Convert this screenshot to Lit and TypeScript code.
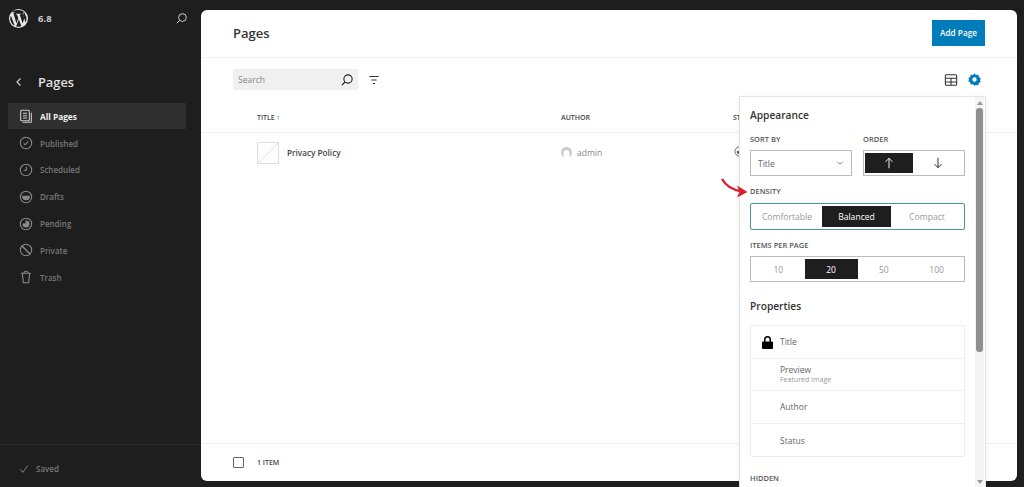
import { LitElement, html, css, svg } from "lit";
import { customElement } from "lit/decorators.js";

const ic = (s: number, body: unknown, cls = "") =>
  html`<svg class=${cls} width=${s} height=${s} viewBox="0 0 24 24" fill="none" stroke="currentColor" stroke-width="1.6">${body}</svg>`;

const searchIcon = svg`<circle cx="13.5" cy="10.5" r="6.2"/><path d="M9 15 4.5 19.5"/>`;

const navIcons: Record<string, unknown> = {
  "All Pages": svg`<rect x="4" y="3.5" width="13" height="15.5" rx="1.5"/><path d="M7.5 8h6M7.5 11.5h6M7.5 15h6M20 7v13.5a1 1 0 0 1-1 1H7"/>`,
  Published: svg`<circle cx="12" cy="12" r="8.5"/><path d="m8.5 12.5 2.3 2.2 4.5-5" />`,
  Scheduled: svg`<circle cx="12" cy="12" r="8.5"/><path d="M12.5 7v5.5H8.5"/>`,
  Drafts: svg`<circle cx="12" cy="12" r="8.5"/><path d="M7 11h10a5 5 0 0 1-10 0Z" fill="currentColor"/>`,
  Pending: svg`<circle cx="12" cy="12" r="8.5"/><path d="M12 7.5a4.5 4.5 0 1 1-4.5 4.5H12Z" fill="currentColor"/>`,
  Private: svg`<circle cx="12" cy="12" r="8.5"/><path d="m6 6 12 12" stroke-width="2.2"/>`,
  Trash: svg`<path d="M4.5 6.5h15M6.5 6.5 8 20.5h8l1.5-14M9 6.5c0-2 .8-3 3-3s3 1 3 3"/>`,
};

@customElement("app-root")
export class AppRoot extends LitElement {
  static styles = css`
    :host { display: block; height: 487px; overflow: hidden; background: #1e1e1e; position: relative; font-family: "Open Sans", "Liberation Sans", sans-serif; color: #1e1e1e; }
    .layout { display: flex; height: 487px; }
    .side { width: 201px; flex: none; display: flex; flex-direction: column; color: #e0e0e0; }
    .brand { display: flex; align-items: center; height: 36px; padding: 0 12px 0 9px; }
    .ver { margin-left: 10px; font-size: 9.5px; font-weight: 700; color: #ccc; flex: 1; }
    .brand svg.s { color: #ccc; }
    .title { display: flex; align-items: center; margin-top: 34px; height: 24px; padding-left: 13px; }
    .title span { margin-left: 13px; font-size: 12.8px; font-weight: 600; color: #e0e0e0; }
    .back { color: #ccc; }
    nav { margin: 9px 15px 0 8px; display: flex; flex-direction: column; flex: 1; }
    .item { display: flex; align-items: center; height: 26.8px; padding-left: 10px; gap: 6px; font-size: 8px; font-weight: 600; color: #777; }
    .item svg { color: #8a8a8a; }
    .item.on { background: #2f2f2f; color: #f0f0f0; font-size: 8.3px; font-weight: 700; height: 26px; margin-bottom: .8px; }
    .item.on svg { color: #ccc; }
    .saved { border-top: 1px solid #2a2a2a; height: 43px; display: flex; align-items: center; gap: 7px; padding: 5px 0 0 19px; box-sizing: border-box; font-size: 8px; font-weight: 600; color: #777; }
    .saved svg { color: #aaa; }
    .panel { width: 816px; flex: none; margin: 10px 0 6px; background: #fff; border-radius: 6px; display: flex; flex-direction: column; }
    .head { height: 47px; flex: none; border-bottom: 1px solid #f0f0f0; display: flex; align-items: center; justify-content: space-between; padding: 0 32px; }
    .head h1 { margin: -1px 0 0; font-size: 13px; font-weight: 600; color: #333; }
    .add { background: #007cba; color: #fff; font-size: 8.2px; font-weight: 600; width: 53px; height: 26px; display: flex; align-items: center; justify-content: center; margin-top: -2px; }
    .tools { height: 43px; flex: none; display: flex; align-items: center; padding: 0 32px; }
    .search { width: 125px; height: 21px; background: #f0f0f0; border-radius: 2px; display: flex; align-items: center; justify-content: space-between; padding: 0 3px 0 5px; box-sizing: border-box; font-size: 8.5px; color: #888; }
    .search svg { color: #1e1e1e; }
    .filter { margin-left: 9px; color: #333; }
    .spacer { flex: 1; }
    .tools .view { color: #333; margin-right: 8px; }
    .tools .gear { color: #007cba; margin-right: 3px; }
    .thead { height: 31px; flex: none; box-sizing: content-box; border-bottom: 1px solid #f0f0f0; display: grid; grid-template-columns: 304px 172px 1fr; padding-left: 56px; align-items: center; font-size: 7px; font-weight: 600; color: #444; }
    .thead span { margin-top: 2px; }
    .row { height: 39px; flex: none; display: grid; grid-template-columns: 304px 172px 1fr; padding-left: 56px; align-items: center; font-size: 8.5px; color: #888; }
    .tcell { display: flex; align-items: center; gap: 8px; font-size: 8.2px; font-weight: 600; color: #444; }
    .thumb { width: 22px; height: 22px; border: 1px solid #ddd; box-sizing: border-box; display: block; }
    .acell { display: flex; align-items: center; gap: 5px; }
    .stat { color: #555; }
    .grow { flex: 1; }
    .foot { height: 38px; flex: none; box-sizing: border-box; border-top: 1px solid #f0f0f0; display: flex; align-items: center; gap: 13px; padding: 0 32px; font-size: 7px; font-weight: 600; color: #444; }
    .check { width: 11px; height: 11px; box-sizing: border-box; border: 1px solid #666; border-radius: 1px; }
    .pop { position: absolute; left: 739px; top: 96px; width: 247px; height: 391px; background: #fff; border: 1px solid #e4e4e4; border-bottom: 0; box-sizing: border-box; box-shadow: 0 1px 4px rgba(0,0,0,.08); display: flex; overflow: hidden; }
    .content { flex: 1; padding: 10px 10px 0 10px; overflow: hidden; }
    .bar { width: 9px; flex: none; background: #f4f4f4; position: relative; margin-right: 1px; }
    .thumbbar { position: absolute; left: 1px; right: 1px; top: 11px; height: 244px; background: #8f8f8f; border-radius: 3px; }
    .up, .down { position: absolute; left: 1.5px; width: 0; height: 0; border-left: 3px solid transparent; border-right: 3px solid transparent; }
    .up { top: 4px; border-bottom: 4px solid #999; }
    .down { bottom: 3px; border-top: 4px solid #999; }
    h2 { margin: 0; font-size: 10.2px; font-weight: 600; color: #333; line-height: 16px; }
    .lab { font-size: 7.5px; font-weight: 600; color: #555; line-height: 10px; }
    .sort { display: grid; grid-template-columns: 102px 102px; gap: 11px; margin-top: 11px; }
    .select { height: 26px; margin-top: 6px; border: 1px solid #bbb; display: flex; align-items: center; justify-content: space-between; padding: 0 6px 0 7px; box-sizing: border-box; font-size: 8.5px; color: #666; }
    .seg { margin-top: 6px; height: 26px; border: 1px solid #bbb; box-sizing: border-box; display: flex; padding: 2px 1px; font-size: 8.5px; color: #999; }
    .seg > div { flex: 1; display: flex; align-items: center; justify-content: center; }
    .seg .sel { background: #1e1e1e; color: #fff; }
    .order > div { color: #1e1e1e; }
    .order .sel { flex: 0 0 48px; color: #fff; }
    .density { margin-top: 7px; height: 27px; border-color: #4a90a8; border-radius: 2px; font-size: 8.6px; }
    .density > div:first-child { flex: 0 0 70px; }
    .density .sel { flex: 0 0 69px; }
    .d { margin-top: 10px; }
    .i { margin-top: 10px; }
    .props { margin-top: 16px; }
    .list { margin-top: 11px; border: 1px solid #eee; border-radius: 2px; }
    .prow { height: 32.6px; border-bottom: 1px solid #f0f0f0; box-sizing: border-box; padding-left: 29px; position: relative; display: flex; flex-direction: column; justify-content: center; font-size: 8.5px; color: #666; }
    .prow:last-child { border-bottom: 0; }
    .prow small { font-size: 7px; color: #999; line-height: 10px; }
    .lock { position: absolute; left: 11px; top: 10px; color: #000; }
    .hid { margin-top: 16px; }
    .arrow { position: absolute; left: 719px; top: 175px; }
  `;

  render() {
    const nav = Object.keys(navIcons);
    return html`
      <div class="layout">
        <aside class="side">
          <div class="brand">
            <svg width="19" height="19" viewBox="0 0 24 24"><path fill="#e8e8e8" fill-rule="evenodd" d="M12 0a12 12 0 1 0 0 24 12 12 0 0 0 0-24Zm0 1.4c2.8 0 5.3 1.1 7.2 2.8h-.2c-1 0-1.8.9-1.8 1.9 0 .9.5 1.6 1 2.4.4.7.9 1.6.9 2.9 0 .9-.3 2-.8 3.4l-1 3.5-3.8-11.3c.6 0 1.2-.1 1.2-.1.6-.1.5-.9-.1-.9 0 0-1.7.1-2.8.1-1 0-2.7-.1-2.7-.1-.6 0-.7.9-.1.9 0 0 .5.1 1.1.1l1.6 4.4-2.3 6.8L5.5 5.1c.6 0 1.2-.1 1.2-.1.6-.1.5-.9-.1-.9 0 0-1.7.1-2.8.1h-.6A10.6 10.6 0 0 1 12 1.4ZM2.4 8.2l4.9 13.3A10.6 10.6 0 0 1 2.4 8.2Zm10 4.8 3.1 8.6.1.2a10.6 10.6 0 0 1-6.5.2L12.4 13Zm7.7-6.3A10.6 10.6 0 0 1 21 17l-3.3-9.4c.6-1.5.8-2.7.8-3.8l-.1-.8c.7.8 1.3 1.7 1.7 2.7Z"/></svg>
            <span class="ver">6.8</span>
            ${ic(15, searchIcon, "s")}
          </div>
          <div class="title">
            ${ic(12, svg`<path d="M15 5 8 12l7 7" stroke-width="2.4"/>`, "back")}
            <span>Pages</span>
          </div>
          <nav>
            ${nav.map(
              (n) => html`<div class="item ${n === "All Pages" ? "on" : ""}">${ic(16, navIcons[n])}<span>${n}</span></div>`
            )}
          </nav>
          <div class="saved">${ic(10, svg`<path d="m3 13 6 7L21 4" stroke-width="1.8"/>`)}<span>Saved</span></div>
        </aside>
        <main class="panel">
          <div class="head"><h1>Pages</h1><div class="add">Add Page</div></div>
          <div class="tools">
            <div class="search"><span>Search</span>${ic(16, searchIcon)}</div>
            ${ic(14, svg`<path d="M4 6h16M7.5 12h9M10 18h4" stroke-width="2"/>`, "filter")}
            <div class="spacer"></div>
            ${ic(16, svg`<rect x="3.5" y="4" width="17" height="16" rx="1.5"/><path d="M3.5 9.5h17M3.5 15h17M12 9.5V20"/>`, "view")}
            ${ic(15, svg`<path fill="currentColor" fill-rule="evenodd" stroke="none" d="m12 2 2.3 2.9 3.7-.4 1 3.6 3 2-1.2 3.4 1.2 2.4-3 1.6-1 3.5-3.7-.4L12 22l-2.3-2.4-3.7.4-1-3.5-3-1.6 1.2-2.9L2 10l3-1.9 1-3.6 3.7.4L12 2Zm0 6.5a3.5 3.5 0 1 0 0 7 3.5 3.5 0 0 0 0-7Z"/>`, "gear")}
          </div>
          <div class="thead"><span>TITLE ↑</span><span>AUTHOR</span><span>STATUS</span></div>
          <div class="row">
            <div class="tcell">
              <svg class="thumb" viewBox="0 0 22 22"><path d="M0 22 22 0" stroke="#ddd" fill="none"/></svg>
              <span>Privacy Policy</span>
            </div>
            <div class="acell">
              <svg width="11" height="11" viewBox="0 0 11 11"><circle cx="5.5" cy="5.5" r="5.5" fill="#c8c8c8"/><path d="M2.5 11V6a3 3 0 0 1 6 0v5Z" fill="#fff" /></svg>
              <span>admin</span>
            </div>
            <div class="stat">${ic(13, navIcons["Pending"])}</div>
          </div>
          <div class="grow"></div>
          <div class="foot"><div class="check"></div><span>1 ITEM</span></div>
        </main>
      </div>
      <section class="pop">
        <div class="content">
          <h2>Appearance</h2>
          <div class="sort">
            <div><div class="lab">SORT BY</div>
              <div class="select"><span>Title</span>${ic(10, svg`<path d="m6 9 6 6 6-6" stroke-width="2"/>`)}</div></div>
            <div><div class="lab">ORDER</div>
              <div class="seg order">
                <div class="sel">${ic(14, svg`<path d="M12 21V4M6 10l6-6 6 6"/>`)}</div>
                <div>${ic(14, svg`<path d="M12 3v17M6 14l6 6 6-6"/>`)}</div>
              </div></div>
          </div>
          <div class="lab d">DENSITY</div>
          <div class="seg density"><div>Comfortable</div><div class="sel">Balanced</div><div>Compact</div></div>
          <div class="lab i">ITEMS PER PAGE</div>
          <div class="seg ipp"><div>10</div><div class="sel">20</div><div>50</div><div>100</div></div>
          <h2 class="props">Properties</h2>
          <div class="list">
            <div class="prow">
              <svg class="lock" width="11" height="13" viewBox="0 0 11 13"><path fill="currentColor" fill-rule="evenodd" d="M1 5.5h1V3.5a3.5 3.5 0 0 1 7 0v2h1a1 1 0 0 1 1 1V12a1 1 0 0 1-1 1H1a1 1 0 0 1-1-1V6.5a1 1 0 0 1 1-1Zm2.5 0h4V3.5a2 2 0 0 0-4 0v2Z"/></svg>
              <span>Title</span>
            </div>
            <div class="prow"><span>Preview</span><small>Featured Image</small></div>
            <div class="prow"><span>Author</span></div>
            <div class="prow"><span>Status</span></div>
          </div>
          <div class="lab hid">HIDDEN</div>
        </div>
        <div class="bar"><div class="up"></div><div class="thumbbar"></div><div class="down"></div></div>
      </section>
      <svg class="arrow" width="32" height="24" viewBox="0 0 32 24">
        <path d="M3 4c4 7 10 11 20 12.5" fill="none" stroke="#d8202a" stroke-width="2.4"/>
        <path d="M28.5 17 18 10.5l2.5 6-2.5 6Z" fill="#d8202a"/>
      </svg>
    `;
  }
}
